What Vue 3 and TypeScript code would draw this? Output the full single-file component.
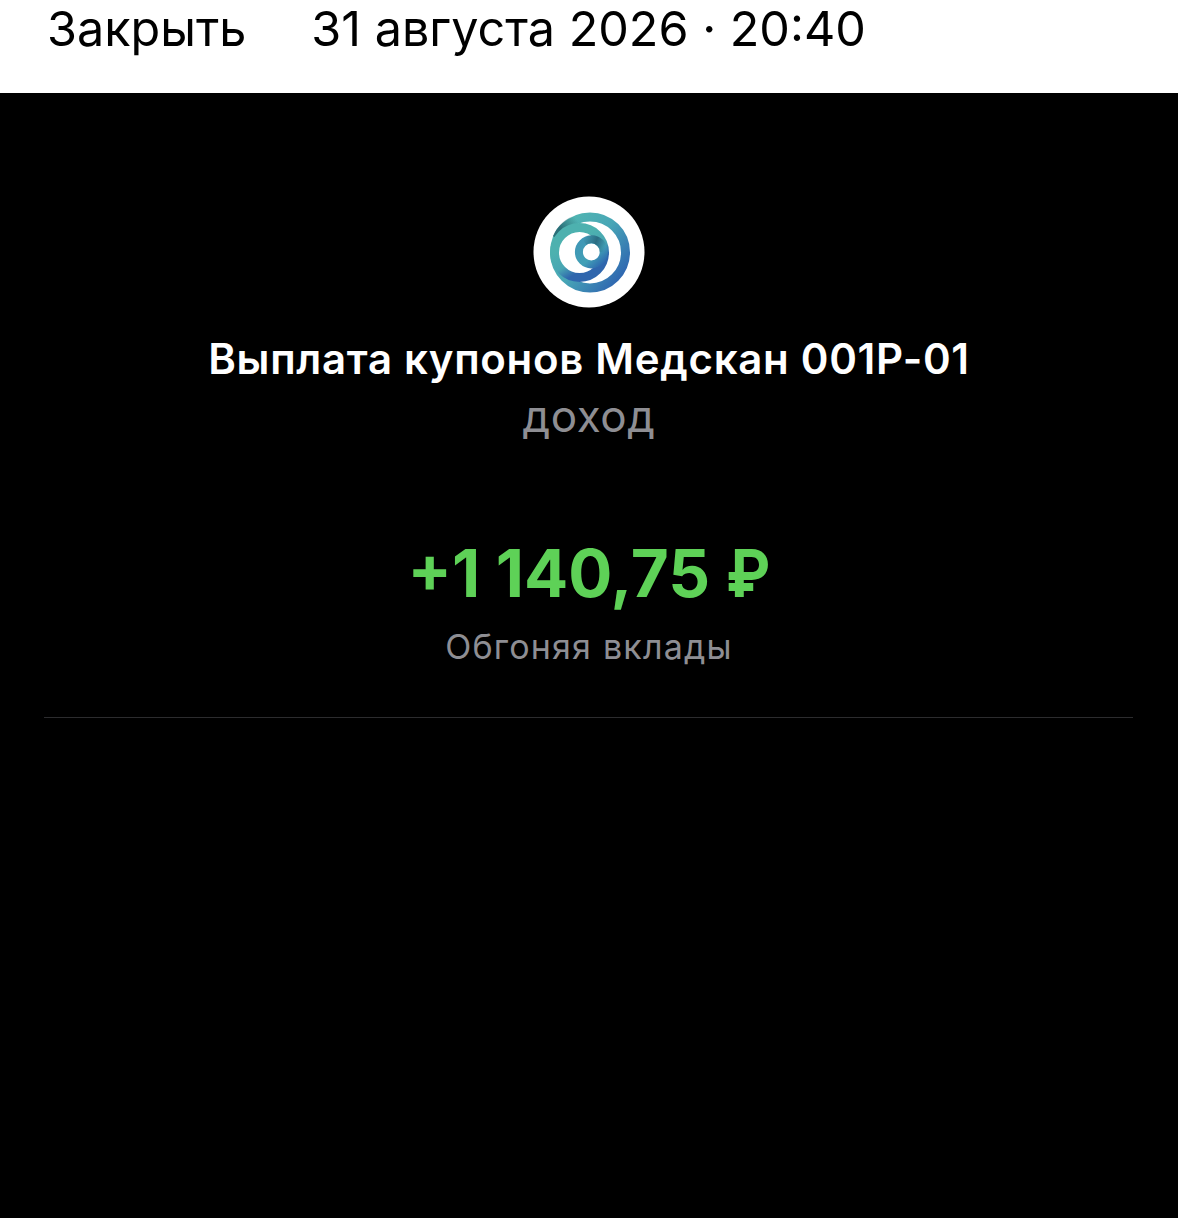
<script setup lang="ts">
const title = 'Выплата купонов Медскан 001Р-01'
</script>

<template>
  <div class="page">
    <header class="top-bar">
      <span class="close">Закрыть</span>
      <span class="date">31 августа 2026 · 20:40</span>
    </header>
    <main class="content">
      <div class="logo">
        <svg width="112" height="112" viewBox="0 0 112 112">
          <defs>
            <linearGradient id="outerGrad" x1="0.2" y1="0.1" x2="1" y2="0.75">
              <stop offset="0" stop-color="#50b4b2" />
              <stop offset="0.45" stop-color="#48a6b6" />
              <stop offset="1" stop-color="#3069b1" />
            </linearGradient>
            <linearGradient id="midGrad" x1="0" y1="0.5" x2="0.3" y2="1">
              <stop offset="0" stop-color="#4db1af" />
              <stop offset="0.6" stop-color="#48a6b3" />
              <stop offset="1" stop-color="#2f66ad" />
            </linearGradient>
            <linearGradient id="innerGrad" x1="0.1" y1="0.1" x2="0.9" y2="1">
              <stop offset="0" stop-color="#4098b6" />
              <stop offset="0.6" stop-color="#41a0b6" />
              <stop offset="1" stop-color="#2f6cb0" />
            </linearGradient>
            <linearGradient id="shadeOuter" gradientUnits="userSpaceOnUse" x1="26" y1="38" x2="44" y2="24">
              <stop offset="0.2" stop-color="#2a6f78" />
              <stop offset="1" stop-color="#2a6f78" stop-opacity="0" />
            </linearGradient>
            <linearGradient id="shadeInner" gradientUnits="userSpaceOnUse" x1="50" y1="44" x2="72" y2="52">
              <stop offset="0" stop-color="#2b6d82" stop-opacity="0" />
              <stop offset="0.55" stop-color="#2b6d82" />
              <stop offset="1" stop-color="#2b6d82" stop-opacity="0" />
            </linearGradient>
          </defs>
          <circle cx="56" cy="56" r="55.5" fill="#fff" />
          <circle cx="57" cy="56.4" r="35.5" fill="none" stroke="url(#outerGrad)" stroke-width="9" />
          <path d="M24 42 A35.5 35.5 0 0 1 46 22.6" fill="none" stroke="url(#shadeOuter)" stroke-width="9" />
          <circle cx="46.5" cy="56.5" r="25" fill="#fff" stroke="url(#midGrad)" stroke-width="9" />
          <circle cx="58.3" cy="56" r="12.4" fill="#fff" stroke="url(#innerGrad)" stroke-width="8" />
          <path d="M51 45.6 A12.4 12.4 0 0 1 70.7 56" fill="none" stroke="url(#shadeInner)" stroke-width="8" />
        </svg>
      </div>
      <h1 class="title">{{ title }}</h1>
      <p class="category">доход</p>
      <p class="amount">+1 140,75 <span class="currency">₽</span></p>
      <p class="note">Обгоняя вклады</p>
      <hr class="divider" />
    </main>
  </div>
</template>

<style scoped>
.page {
  width: 1178px;
  height: 1218px;
  overflow: hidden;
  background: #000;
  font-family: Inter, "Liberation Sans", sans-serif;
}

.top-bar {
  height: 93px;
  box-sizing: border-box;
  background: #fff;
  color: #000;
  display: flex;
  gap: 65px;
  padding: 0 0 0 47px;
  font-size: 48.5px;
  line-height: 57px;
}

.content {
  display: flex;
  flex-direction: column;
  align-items: center;
  padding-top: 103px;
}

.logo {
  width: 112px;
  height: 112px;
  margin-bottom: 27px;
}

.logo svg {
  display: block;
}

.title {
  margin: 0;
  color: #fff;
  font-size: 42px;
  font-weight: 600;
  line-height: 48px;
  letter-spacing: 0.7px;
}

.category {
  margin: 9px 0 0;
  color: #8e8e93;
  font-size: 44px;
  line-height: 48px;
  letter-spacing: 0.6px;
}

.amount {
  margin: 96px 0 0;
  color: #5ed157;
  font-size: 65.5px;
  font-weight: 700;
  line-height: 76px;
}

.currency {
  display: inline-block;
  width: 40px;
  padding-right: 5px;
  transform: scaleX(0.91);
  transform-origin: left;
}

.note {
  margin: 15px 0 0;
  color: #8e8e93;
  font-size: 34px;
  line-height: 40px;
  letter-spacing: 1.2px;
}

.divider {
  align-self: flex-start;
  width: 1089px;
  margin: 50px 0 0 44px;
  border: 0;
  border-top: 1px solid #2c2c2e;
}
</style>
